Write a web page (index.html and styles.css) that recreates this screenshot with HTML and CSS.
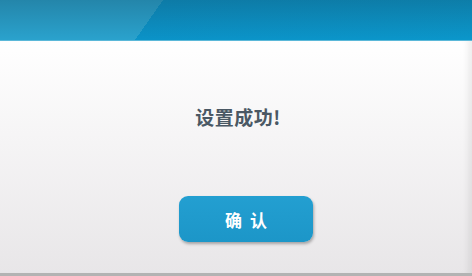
FILE: index.html
```html
<!DOCTYPE html>
<html lang="zh">
<head>
<meta charset="utf-8">
<link rel="stylesheet" href="styles.css">
</head>
<body>
<div class="dialog">
  <div class="header"></div>
  <div class="content">
    <p class="message">设置成功!</p>
    <button class="confirm">确 认</button>
  </div>
</div>
</body>
</html>
```
FILE: styles.css
```css
html, body {
  margin: 0;
  padding: 0;
}
body {
  width: 472px;
  height: 276px;
  overflow: hidden;
  background: #e6e5e6;
  font-family: "Noto Sans CJK SC", "Liberation Sans", sans-serif;
}
.dialog {
  width: 472px;
  height: 276px;
  display: flex;
  flex-direction: column;
}
.header {
  height: 40px;
  flex: none;
  background:
    linear-gradient(to bottom, rgba(20, 60, 80, 0.28), rgba(20, 60, 80, 0) 100%),
    linear-gradient(125deg, #2aa2cd 0, #2aa2cd 133.5px, #0b93c8 133.5px, #0b97cb 100%);
  border-bottom: 1px solid #5bb8d9;
}
.content {
  flex: 1;
  display: flex;
  flex-direction: column;
  align-items: center;
  background: linear-gradient(to bottom, #ffffff 0%, #f6f5f6 40%, #e8e6e8 100%);
  box-shadow: inset -8px 0 6px -4px rgba(0, 0, 0, 0.07);
  border-bottom: 3px solid #b3b3b3;
}
.message {
  margin: 63px 0 0 4px;
  font-size: 19px;
  line-height: 26px;
  font-weight: bold;
  color: #4a5864;
  letter-spacing: 0.5px;
}
.confirm {
  margin: 66px 0 0 20px;
  width: 134px;
  height: 46px;
  border: none;
  border-radius: 9px;
  background: linear-gradient(to bottom, #239fd1, #1c96c8);
  box-shadow: 1px 2px 3px rgba(0, 0, 0, 0.3);
  color: #ffffff;
  font-family: "Noto Sans CJK SC", "Liberation Sans", sans-serif;
  font-size: 17px;
  font-weight: bold;
  letter-spacing: 2px;
  padding: 0 0 0 2px;
}
```
